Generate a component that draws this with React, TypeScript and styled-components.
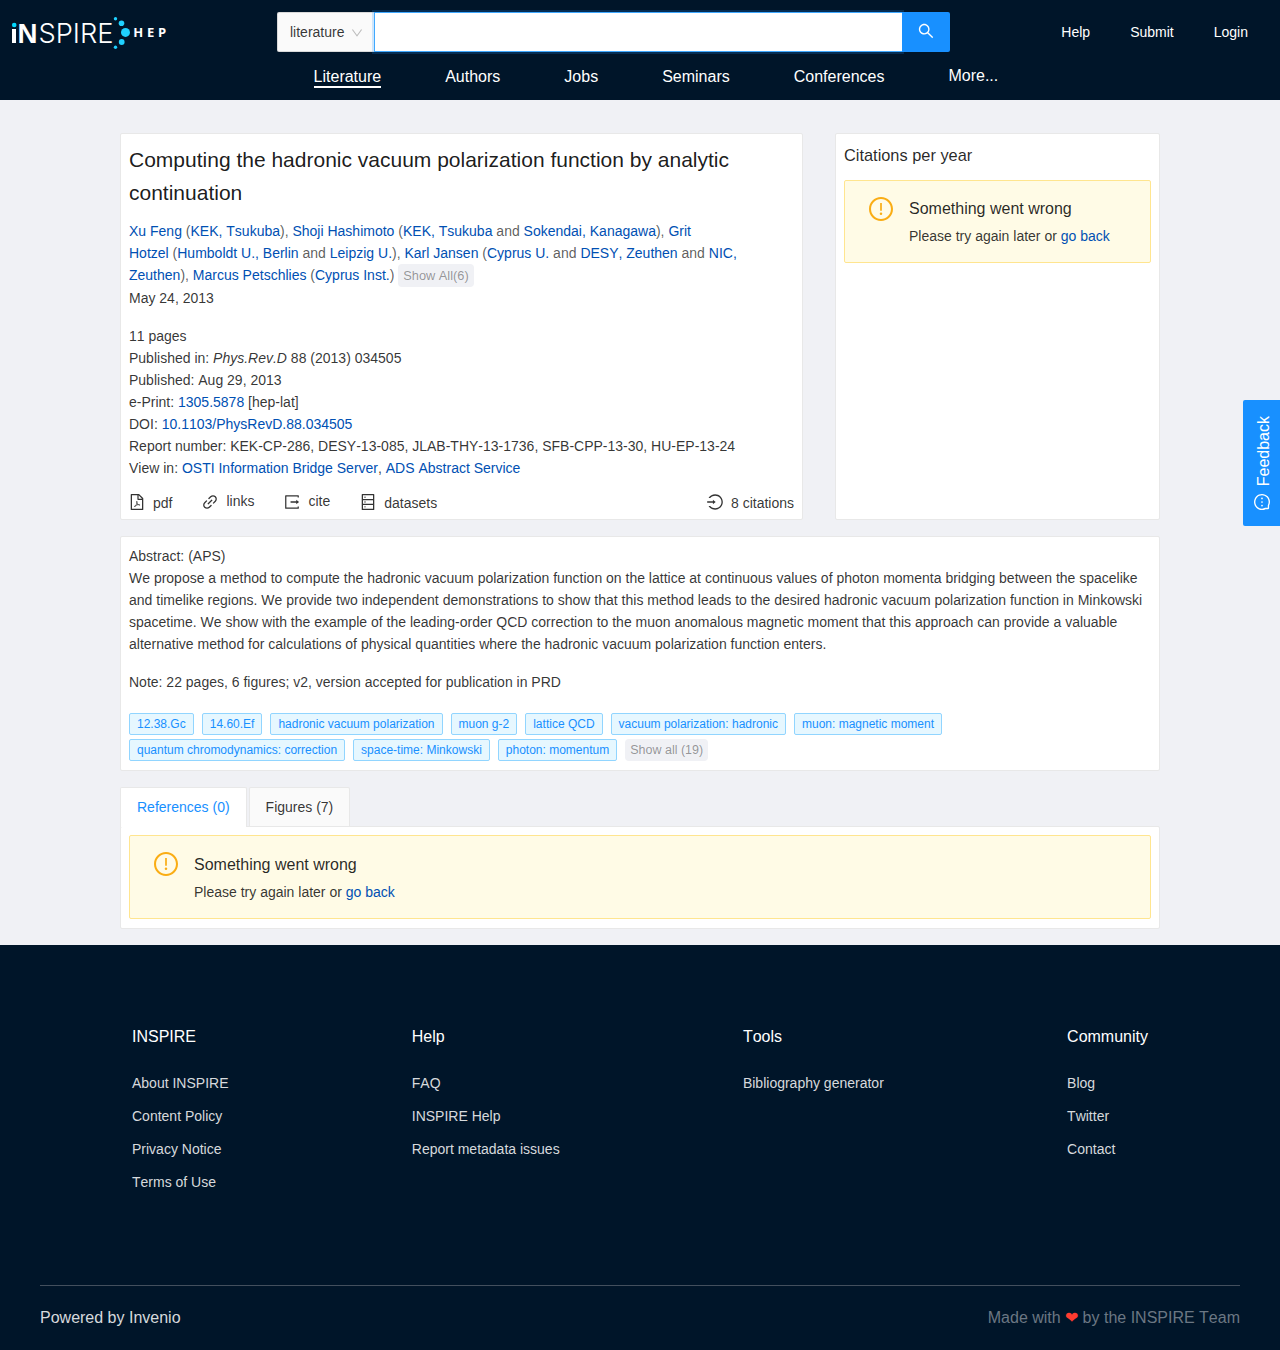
import React from 'react';
import styled, { createGlobalStyle } from 'styled-components';
import {
  AiOutlineDatabase,
  AiOutlineDown,
  AiOutlineExclamationCircle,
  AiOutlineFilePdf,
  AiOutlineLink,
  AiOutlineLogin,
  AiOutlineMessage,
  AiOutlineSearch,
} from 'react-icons/ai';

const GlobalStyle = createGlobalStyle`
  *, *::before, *::after { box-sizing: border-box; }
  body {
    margin: 0;
    background: #f0f1f5;
    color: rgba(0, 0, 0, 0.8);
    font-family: "Liberation Sans", Arial, sans-serif;
    font-size: 14px;
    line-height: 22px;
    font-kerning: none;
  }
  a { color: #0050b3; text-decoration: none; }
  svg { display: block; flex: none; }
`;

const Header = styled.header`
  height: 100px;
  background: #001529;
`;

const HeaderTop = styled.div`
  display: flex;
  height: 64px;
`;

const LogoLink = styled.a`
  width: 277px;
  padding: 12px 0 0 8px;
`;

const SearchBox = styled.form`
  display: flex;
  width: 673px;
  height: 40px;
  margin: 12px 0 0;
`;

const ScopeSelect = styled.div`
  display: flex;
  align-items: center;
  justify-content: space-between;
  width: 97px;
  padding: 0 11px 0 12px;
  border: 1px solid #d9d9d9;
  border-right: 0;
  border-radius: 2px 0 0 2px;
  background: #fafafa;
  svg { color: rgba(0, 0, 0, 0.25); margin-top: 2px; }
`;

const SearchInput = styled.input`
  width: 528px;
  border: 1px solid #40a9ff;
  border-right-width: 0;
  padding: 0 11px;
  background: #fff;
  box-shadow: 0 0 0 2px rgba(24, 144, 255, 0.2);
  outline: none;
  font: inherit;
`;

const SearchButton = styled.button`
  display: flex;
  justify-content: center;
  width: 48px;
  padding: 11px 0 0;
  border: 0;
  border-radius: 0 2px 2px 0;
  background: #1890ff;
  color: #fff;
  position: relative;
`;

const UserLinks = styled.nav`
  display: flex;
  flex: 1;
  justify-content: flex-end;
  gap: 40px;
  padding: 21px 32px 0 0;
  a { color: #fff; }
`;

const MainNav = styled.nav`
  display: flex;
  align-items: flex-start;
  gap: 64px;
  padding-left: 313.6px;
  font-size: 16px;
`;

const NavItem = styled.a<{ $active?: boolean; $raised?: boolean }>`
  height: 23px;
  margin-top: ${(p) => (p.$raised ? 0 : 1)}px;
  padding-top: 1px;
  border-bottom: 2px solid ${(p) => (p.$active ? '#fff' : 'transparent')};
  color: #fff;
`;

const Main = styled.main`
  width: 1040px;
  margin: 0 auto;
  padding: 33px 0 16px;
`;

const TopRow = styled.div`
  display: flex;
  gap: 32px;
  height: 387px;
`;

const Card = styled.section`
  padding: 8px;
  border: 1px solid #e8e8e8;
  border-radius: 2px;
  background: #fff;
`;

const RecordCard = styled(Card)`
  display: flex;
  flex-direction: column;
  width: 683px;
`;

const CitationsCard = styled(Card)`
  flex: 1;
`;

const Title = styled.h1`
  margin: 1px 0 11px;
  color: rgba(0, 0, 0, 0.9);
  font-size: 21px;
  font-weight: 400;
  line-height: 33px;
`;

const Authors = styled.div`
  color: rgba(0, 0, 0, 0.65);
`;

const ShowAll = styled.span<{ $author?: boolean }>`
  display: inline-block;
  height: ${(p) => (p.$author ? 23 : 22)}px;
  padding: 0 5px;
  border-radius: 4px;
  background: #f0f1f5;
  color: rgba(0, 0, 0, 0.4);
  font-size: ${(p) => (p.$author ? 12.8 : 12.5)}px;
  line-height: ${(p) => (p.$author ? 23 : 22)}px;
  vertical-align: top;
`;

const Details = styled.div`
  margin-top: 16px;
`;

const Actions = styled.div`
  display: flex;
  gap: 30px;
  height: 32px;
  margin-top: 12px;
`;

const Action = styled.a<{ $raised?: boolean; $end?: boolean }>`
  display: flex;
  align-items: center;
  gap: 8px;
  height: 22px;
  margin-left: ${(p) => (p.$end ? 'auto' : '0')};
  color: rgba(0, 0, 0, 0.8);
  span { margin-top: ${(p) => (p.$raised ? -2 : 2)}px; }
`;

const CardHeading = styled.h2`
  margin: 1px 0 12px;
  color: rgba(0, 0, 0, 0.85);
  font-size: 16.38px;
  font-weight: 400;
  line-height: 25px;
`;

const AlertBox = styled.div<{ $compact?: boolean }>`
  display: flex;
  gap: 16px;
  height: ${(p) => (p.$compact ? 83 : 84)}px;
  padding: ${(p) => (p.$compact ? 15 : 16)}px 15px 15px 24px;
  border: 1px solid #ffe58f;
  border-radius: 2px;
  background: #fffbe6;
  > svg { color: #faad14; margin-top: ${(p) => (p.$compact ? 1 : 0)}px; }
`;

const AlertTitle = styled.div`
  margin: 0 0 4px;
  color: rgba(0, 0, 0, 0.85);
  font-size: 16px;
  line-height: 25px;
`;

const AbstractCard = styled(Card)`
  height: 235px;
  margin: 16px 0;
`;

const Note = styled.div`
  margin: 16px 0 20px;
`;

const Tags = styled.div`
  display: flex;
  flex-wrap: wrap;
  gap: 4px 8px;
  padding-right: 180px;
`;

const Tag = styled.a`
  height: 22px;
  padding: 0 7px;
  border: 1px solid #91d5ff;
  border-radius: 2px;
  background: #e6f7ff;
  color: #1890ff;
  font-size: 12px;
  line-height: 20px;
`;

const Tabs = styled.div`
  display: flex;
  gap: 2px;
  height: 39px;
`;

const Tab = styled.div<{ $active?: boolean }>`
  height: ${(p) => (p.$active ? 40 : 39)}px;
  padding: 8px 16px;
  border: 1px solid #e8e8e8;
  border-bottom: 0;
  border-radius: 2px 2px 0 0;
  background: ${(p) => (p.$active ? '#fff' : '#fafafa')};
  color: ${(p) => (p.$active ? '#1890ff' : 'rgba(0, 0, 0, 0.8)')};
  z-index: 1;
`;

const TabPanel = styled(Card)`
  height: 103px;
`;

const Footer = styled.footer`
  height: 405px;
  padding: 79px 40px 0;
  background: #001529;
  color: rgba(255, 255, 255, 0.9);
  a { color: rgba(255, 255, 255, 0.85); }
`;

const FooterColumns = styled.div`
  display: flex;
  justify-content: space-between;
  height: 261px;
  padding: 0 92px;
`;

const FooterColumn = styled.div`
  display: flex;
  flex-direction: column;
  gap: 11px;
`;

const FooterHeading = styled.h2`
  margin: 0 0 12px;
  color: #fff;
  font-size: 16px;
  font-weight: 400;
  line-height: 25px;
`;

const FooterBottom = styled.div`
  display: flex;
  justify-content: space-between;
  padding-top: 19px;
  border-top: 1px solid #434f5d;
  font-size: 16px;
  line-height: 25px;
`;

const Credit = styled.span`
  color: #6b7783;
`;

const Heart = styled.span`
  color: #ff3b30;
`;

const Feedback = styled.button`
  position: fixed;
  top: 400px;
  right: 0;
  display: flex;
  flex-direction: row-reverse;
  align-items: center;
  justify-content: flex-end;
  gap: 8px;
  width: 37px;
  height: 126px;
  padding: 16px 0 15px;
  border: 0;
  border-radius: 2px 0 0 2px;
  background: #1890ff;
  color: #fff;
  font: 16px/22px "Liberation Sans", Arial, sans-serif;
  writing-mode: vertical-rl;
  span { transform: rotate(180deg); margin-left: 4px; }
  svg { transform: rotate(-90deg); }
`;

const ICON_BOX = '64 64 896 896';

function ExportIcon() {
  return (
    <svg width="16" height="16" viewBox={ICON_BOX} fill="currentColor">
      <path d="M888.3 757.4h-53.8c-4.2 0-7.7 3.5-7.7 7.7v61.8H197.1V197.1h629.8v61.8c0 4.2 3.5 7.7 7.7 7.7h53.8c4.2 0 7.7-3.4 7.7-7.7V158.7c0-17-13.7-30.7-30.7-30.7H158.7c-17 0-30.7 13.7-30.7 30.7v706.6c0 17 13.7 30.7 30.7 30.7h706.6c17 0 30.7-13.7 30.7-30.7V765.1c0-4.3-3.5-7.7-7.7-7.7zm18.6-251.7L765 393.7c-5.3-4.2-13-.4-13 6.3v76H438c-4.4 0-8 3.6-8 8v56c0 4.4 3.6 8 8 8h314v76c0 6.7 7.8 10.5 13 6.3l141.9-112a8 8 0 0 0 0-12.6z" />
    </svg>
  );
}

function Logo() {
  return (
    <svg width="168" height="42" viewBox="8 12 168 42" aria-label="INSPIRE HEP">
      <g fill="#fff" fontFamily="Liberation Sans, Arial, sans-serif">
        <rect x="12" y="29" width="4" height="14" />
        <text x="17.5" y="43" fontSize="28" fontWeight="700" textLength="20" lengthAdjust="spacingAndGlyphs">N</text>
        <text x="38.5" y="42.7" fontSize="27" fontFamily="Inter, sans-serif" fontWeight="300" textLength="75" lengthAdjust="spacingAndGlyphs">SPIRE</text>
        <text x="133.3" y="37" fontSize="13" fontFamily="Open Sans, sans-serif" fontWeight="700" letterSpacing="3.7">HEP</text>
      </g>
      <g fill="#1fd1ff">
        <circle cx="14.2" cy="25" r="2.3" fill="#00d8ff" />
        <circle cx="115.5" cy="18.7" r="1.7" />
        <circle cx="121.5" cy="23.3" r="2.8" />
        <circle cx="125.5" cy="32.4" r="4.5" />
        <circle cx="121.7" cy="42" r="2.9" />
        <circle cx="115.5" cy="47.3" r="1.7" />
      </g>
    </svg>
  );
}

function ErrorAlert({ compact }: { compact?: boolean }) {
  return (
    <AlertBox $compact={compact}>
      <AiOutlineExclamationCircle size={24} viewBox={ICON_BOX} />
      <div>
        <AlertTitle>Something went wrong</AlertTitle>
        Please try again later or <a>go back</a>
      </div>
    </AlertBox>
  );
}

const keywords = [
  '12.38.Gc', '14.60.Ef', 'hadronic vacuum polarization', 'muon g-2', 'lattice QCD',
  'vacuum polarization: hadronic', 'muon: magnetic moment',
  'quantum chromodynamics: correction', 'space-time: Minkowski', 'photon: momentum',
];

const authors = [
  { name: 'Xu Feng', affiliations: ['KEK, Tsukuba'] },
  { name: 'Shoji Hashimoto', affiliations: ['KEK, Tsukuba', 'Sokendai, Kanagawa'] },
  { name: 'Grit Hotzel', affiliations: ['Humboldt U., Berlin', 'Leipzig U.'] },
  { name: 'Karl Jansen', affiliations: ['Cyprus U.', 'DESY, Zeuthen', 'NIC, Zeuthen'] },
  { name: 'Marcus Petschlies', affiliations: ['Cyprus Inst.'] },
];

const footerColumns = [
  { title: 'INSPIRE', links: ['About INSPIRE', 'Content Policy', 'Privacy Notice', 'Terms of Use'] },
  { title: 'Help', links: ['FAQ', 'INSPIRE Help', 'Report metadata issues'] },
  { title: 'Tools', links: ['Bibliography generator'] },
  { title: 'Community', links: ['Blog', 'Twitter', 'Contact'] },
];

export default function App() {
  return (
    <>
      <GlobalStyle />
      <Header>
        <HeaderTop>
          <LogoLink><Logo /></LogoLink>
          <SearchBox>
            <ScopeSelect>literature <AiOutlineDown size={12} viewBox={ICON_BOX} /></ScopeSelect>
            <SearchInput aria-label="Search" />
            <SearchButton type="button" aria-label="Submit search"><AiOutlineSearch size={16} viewBox={ICON_BOX} /></SearchButton>
          </SearchBox>
          <UserLinks><a>Help</a><a>Submit</a><a>Login</a></UserLinks>
        </HeaderTop>
        <MainNav>
          <NavItem $active>Literature</NavItem>
          <NavItem>Authors</NavItem>
          <NavItem>Jobs</NavItem>
          <NavItem>Seminars</NavItem>
          <NavItem>Conferences</NavItem>
          <NavItem $raised>More...</NavItem>
        </MainNav>
      </Header>

      <Main>
        <TopRow>
          <RecordCard>
            <Title>Computing the hadronic vacuum polarization function by analytic continuation</Title>
            <Authors>
              {authors.map((author, i) => (
                <React.Fragment key={author.name}>
                  {i > 0 && ', '}
                  <a>{author.name}</a>{'\u00a0('}
                  {author.affiliations.map((name, j) => (
                    <React.Fragment key={name}>{j > 0 && ' and '}<a>{name}</a></React.Fragment>
                  ))}
                  {')'}
                </React.Fragment>
              ))}{' '}
              <ShowAll $author>Show All(6)</ShowAll>
            </Authors>
            <div>May 24, 2013</div>
            <Details>
              <div>11 pages</div>
              <div>Published in: <i>Phys.Rev.D</i> 88 (2013) 034505</div>
              <div>Published: Aug 29, 2013</div>
              <div>e-Print: <a>1305.5878</a> [hep-lat]</div>
              <div>DOI: <a>10.1103/PhysRevD.88.034505</a></div>
              <div>Report number: KEK-CP-286, DESY-13-085, JLAB-THY-13-1736, SFB-CPP-13-30, HU-EP-13-24</div>
              <div>View in: <a>OSTI Information Bridge Server</a>, <a>ADS Abstract Service</a></div>
            </Details>
            <Actions>
              <Action><AiOutlineFilePdf size={16} viewBox={ICON_BOX} /><span>pdf</span></Action>
              <Action $raised><AiOutlineLink size={16} viewBox={ICON_BOX} /><span>links</span></Action>
              <Action $raised><ExportIcon /><span>cite</span></Action>
              <Action><AiOutlineDatabase size={16} viewBox={ICON_BOX} /><span>datasets</span></Action>
              <Action $end><AiOutlineLogin size={16} viewBox={ICON_BOX} /><span>8 citations</span></Action>
            </Actions>
          </RecordCard>
          <CitationsCard>
            <CardHeading>Citations per year</CardHeading>
            <ErrorAlert compact />
          </CitationsCard>
        </TopRow>

        <AbstractCard>
          <div>Abstract: (APS)</div>
          <div>
            We propose a method to compute the hadronic vacuum polarization function on the lattice at continuous values of photon momenta bridging between the spacelike and timelike regions. We provide two independent demonstrations to show that this method leads to the desired hadronic vacuum polarization function in Minkowski spacetime. We show with the example of the leading-order QCD correction to the muon anomalous magnetic moment that this approach can provide a valuable alternative method for calculations of physical quantities where the hadronic vacuum polarization function enters.
          </div>
          <Note>Note: 22 pages, 6 figures; v2, version accepted for publication in PRD</Note>
          <Tags>
            {keywords.map((k) => <Tag key={k}>{k}</Tag>)}
            <ShowAll>Show all (19)</ShowAll>
          </Tags>
        </AbstractCard>

        <Tabs>
          <Tab $active>References (0)</Tab>
          <Tab>Figures (7)</Tab>
        </Tabs>
        <TabPanel><ErrorAlert /></TabPanel>
      </Main>

      <Footer>
        <FooterColumns>
          {footerColumns.map((c) => (
            <FooterColumn key={c.title}>
              <FooterHeading>{c.title}</FooterHeading>
              {c.links.map((l) => <a key={l}>{l}</a>)}
            </FooterColumn>
          ))}
        </FooterColumns>
        <FooterBottom>
          <a>Powered by Invenio</a>
          <Credit>Made with <Heart>❤</Heart> by the INSPIRE Team</Credit>
        </FooterBottom>
      </Footer>

      <Feedback type="button"><AiOutlineMessage size={16} viewBox={ICON_BOX} /><span>Feedback</span></Feedback>
    </>
  );
}
